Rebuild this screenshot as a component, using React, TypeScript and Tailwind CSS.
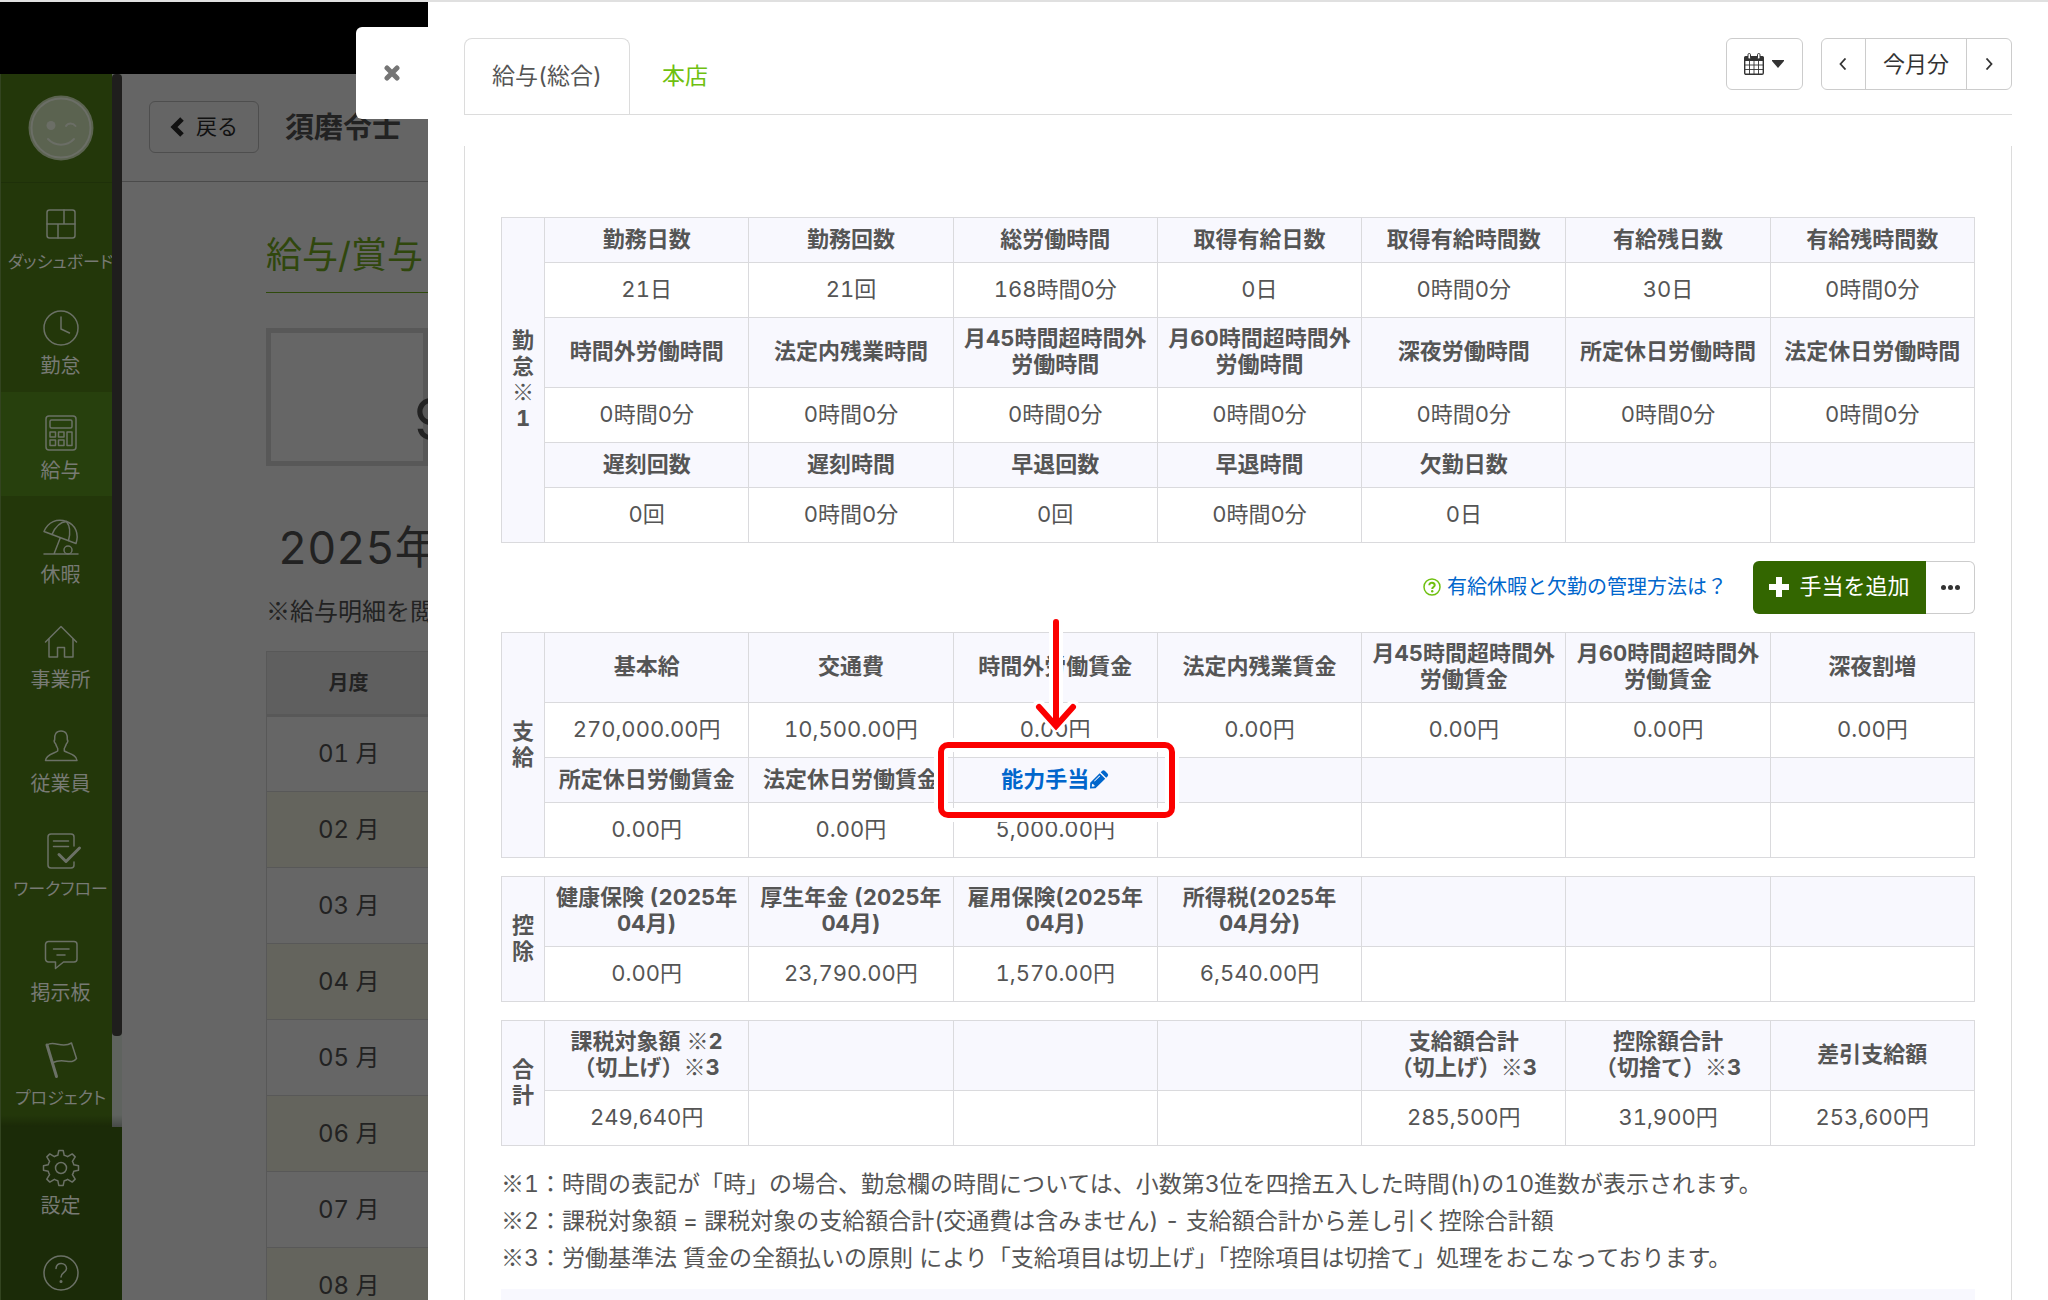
import type { ReactNode } from "react";

type Cell = { label: string; value: string; editable?: boolean };

const c = (label = "", value = "", editable = false): Cell => ({ label, value, editable });

const attendance: Cell[][] = [
  [
    c("勤務日数", "21日"),
    c("勤務回数", "21回"),
    c("総労働時間", "168時間0分"),
    c("取得有給日数", "0日"),
    c("取得有給時間数", "0時間0分"),
    c("有給残日数", "30日"),
    c("有給残時間数", "0時間0分"),
  ],
  [
    c("時間外労働時間", "0時間0分"),
    c("法定内残業時間", "0時間0分"),
    c("月45時間超時間外\n労働時間", "0時間0分"),
    c("月60時間超時間外\n労働時間", "0時間0分"),
    c("深夜労働時間", "0時間0分"),
    c("所定休日労働時間", "0時間0分"),
    c("法定休日労働時間", "0時間0分"),
  ],
  [
    c("遅刻回数", "0回"),
    c("遅刻時間", "0時間0分"),
    c("早退回数", "0回"),
    c("早退時間", "0時間0分"),
    c("欠勤日数", "0日"),
    c(),
    c(),
  ],
];

const payments: Cell[][] = [
  [
    c("基本給", "270,000.00円"),
    c("交通費", "10,500.00円"),
    c("時間外労働賃金", "0.00円"),
    c("法定内残業賃金", "0.00円"),
    c("月45時間超時間外\n労働賃金", "0.00円"),
    c("月60時間超時間外\n労働賃金", "0.00円"),
    c("深夜割増", "0.00円"),
  ],
  [
    c("所定休日労働賃金", "0.00円"),
    c("法定休日労働賃金", "0.00円"),
    c("能力手当", "5,000.00円", true),
    c(),
    c(),
    c(),
    c(),
  ],
];

const deductions: Cell[][] = [
  [
    c("健康保険 (2025年\n04月)", "0.00円"),
    c("厚生年金 (2025年\n04月)", "23,790.00円"),
    c("雇用保険(2025年\n04月)", "1,570.00円"),
    c("所得税(2025年\n04月分)", "6,540.00円"),
    c(),
    c(),
    c(),
  ],
];

const totals: Cell[][] = [
  [
    c("課税対象額 ※2\n（切上げ）※3", "249,640円"),
    c(),
    c(),
    c(),
    c("支給額合計\n（切上げ）※3", "285,500円"),
    c("控除額合計\n（切捨て）※3", "31,900円"),
    c("差引支給額", "253,600円"),
  ],
];

const months = ["01 月", "02 月", "03 月", "04 月", "05 月", "06 月", "07 月", "08 月"];

/* Sets the reference mark in the Japanese face, at full width and regular weight. */
function Marked({ text }: { text: string }) {
  return (
    <>
      {text.split("※").map((part, i) => (
        <span key={i}>
          {i > 0 && <span className="font-['Noto_Sans_CJK_JP',sans-serif] leading-none font-normal">※</span>}
          {part}
        </span>
      ))}
    </>
  );
}

function Icon({ children }: { children: ReactNode }) {
  return (
    <svg
      viewBox="0 0 36 36"
      className="size-9 shrink-0 overflow-visible"
      fill="none"
      stroke="currentColor"
      strokeWidth="1.5"
      strokeLinecap="round"
      strokeLinejoin="round"
      aria-hidden="true"
    >
      {children}
    </svg>
  );
}

const icons = {
  dashboard: (
    <Icon>
      <rect x="4" y="4" width="28" height="28" rx="2.5" />
      <path d="M4 18h28M21 4v14M15 18v14" />
    </Icon>
  ),
  clock: (
    <Icon>
      <circle cx="18" cy="18" r="17" />
      <path d="M18 7v12l8.500 4" />
    </Icon>
  ),
  calculator: (
    <Icon>
      <rect x="3" y="1" width="30" height="34" rx="3" />
      <rect x="7" y="5" width="22" height="8" rx="1.500" />
      <rect x="7" y="17" width="5.500" height="5" />
      <rect x="15.500" y="17" width="5.500" height="5" />
      <rect x="24" y="17" width="5" height="13.500" />
      <rect x="7" y="25" width="5.500" height="5.500" />
      <rect x="15.500" y="25" width="5.500" height="5.500" />
    </Icon>
  ),
  umbrella: (
    <Icon>
      <path d="M1 12.500C5 3 14 -1 23.500 2.500S36 15 33 24.500Z" />
      <path d="M9 15.500C12 8.500 17 3 23.500 2.500C27 7 27.500 14 25.500 21.500" />
      <path d="M17.300 18.800L11 35M1 35h34" />
      <circle cx="25" cy="31" r="4" />
    </Icon>
  ),
  home: (
    <Icon>
      <path d="M2.500 18L18 2.500L33.500 18" />
      <path d="M6 15v18h8.500V23.500h7V33H30V15" />
    </Icon>
  ),
  person: (
    <Icon>
      <path d="M18 3c5 0 6.700 3.500 6.300 8.500c1 1.500 0 3.500-1 4.500c-.5 2-1.500 3.500-2 4.500v2.500c4 2.500 12.200 3.500 12.700 9.500H2.500c.5-6 8.500-7 12.200-9.500v-2.500c-.5-1-1.500-2.500-2-4.500c-1-1-2-3-1-4.500C11.300 6.500 13 3 18 3Z" />
    </Icon>
  ),
  workflow: (
    <Icon>
      <path d="M31 13V4a3 3 0 0 0-3-3H8a3 3 0 0 0-3 3v28a3 3 0 0 0 3 3h20a3 3 0 0 0 3-3v-3M10.500 8h15M10.500 13.500h15" />
      <path d="M16 21.500l7 7L36.500 15" strokeWidth="3" />
    </Icon>
  ),
  board: (
    <Icon>
      <path d="M5.500 4.500h25.500a3 3 0 0 1 3 3v14.500a3 3 0 0 1-3 3H20.500l-8 6.500V25h-7a3 3 0 0 1-3-3V7.500a3 3 0 0 1 3-3ZM10.500 12h15.500M14 18h8" />
    </Icon>
  ),
  flag: (
    <Icon>
      <path d="M4 3l9.500 31.500" strokeWidth="3" />
      <path d="M4 3c7-5 15 4 24.500-2l5 15.500c-5 7-13-1-23.500 4" />
    </Icon>
  ),
  gear: (
    <Icon>
      <circle cx="18" cy="18" r="5.500" />
      <path d="M15.800 0.500h4.400l1 4.800q2 .5 3.400 1.400l4.600-2.800l3 3l-2.800 4.500q1 1.500 1.400 3.400l4.700 1v4.400l-4.700 1q-.5 2-1.400 3.400l2.800 4.500l-3 3l-4.600-2.800q-1.500 1-3.400 1.400l-1 4.700h-4.400l-1-4.700q-2-.5-3.400-1.400l-4.600 2.800l-3-3l2.800-4.500q-1-1.500-1.400-3.400l-4.700-1v-4.400l4.700-1q.5-2 1.400-3.400l-2.800-4.500l3-3l4.600 2.800q1.500-1 3.400-1.400Z" />
    </Icon>
  ),
  help: (
    <Icon>
      <circle cx="18" cy="18" r="17" />
      <path d="M13 13.500c0-7 10.500-6.500 10.500 0c0 4-5.500 4-5.500 8.500" />
      <circle cx="18" cy="26.500" r=".8" fill="currentColor" />
    </Icon>
  ),
};

type NavEntry = { label: string; icon: ReactNode; active?: boolean; long?: boolean };

const nav: NavEntry[] = [
  { label: "ダッシュボード", icon: icons.dashboard, long: true },
  { label: "勤怠", icon: icons.clock },
  { label: "給与", icon: icons.calculator, active: true },
  { label: "休暇", icon: icons.umbrella },
  { label: "事業所", icon: icons.home },
  { label: "従業員", icon: icons.person },
  { label: "ワークフロー", icon: icons.workflow, long: true },
  { label: "掲示板", icon: icons.board },
  { label: "プロジェクト", icon: icons.flag, long: true },
];

function NavItem({ label, icon, active, long }: NavEntry) {
  return (
    <a
      href="#"
      aria-label={label || "ヘルプ"}
      className={
        "flex min-h-0 flex-1 flex-col items-center gap-2 pt-[23px] pl-2 text-[#6b7166] " +
        (active ? "bg-[#27400d]" : "")
      }
    >
      {icon}
      <span
        className={
          "leading-6 whitespace-nowrap text-[#777a74] [font-feature-settings:'palt'] " +
          (long ? "text-[17px]" : "text-[20px]")
        }
      >
        {label}
      </span>
    </a>
  );
}

function Sidebar() {
  return (
    <nav className="flex w-[122px] shrink-0 flex-col border-l border-[#334420] bg-[#1b2b08]">
      <div className="relative flex h-[1053px] shrink-0">
        <div className="flex min-w-0 flex-1 flex-col overflow-hidden bg-[#23370a] pb-1">
          <div className="flex h-[109px] shrink-0 items-center justify-center border-b border-[#1e3009] pl-2">
            <svg viewBox="0 0 66 66" className="size-[66px]" fill="none" stroke="#6b6e66" strokeLinecap="round" aria-hidden="true">
              <circle cx="33" cy="33" r="32.500" fill="#5b6350" stroke="none" />
              <circle cx="33" cy="33" r="29.500" strokeWidth="2" />
              <circle cx="23" cy="30.500" r="4.500" fill="#6b6e66" stroke="none" />
              <path d="M38 31c2-3.500 7-3.500 9.500 0M20 44c7 7.500 19 7.500 26 0" strokeWidth="2" />
            </svg>
          </div>
          {nav.map((item) => (
            <NavItem key={item.label} {...item} />
          ))}
        </div>
        <div className="w-2.5 bg-[#5f635f]">
          <div className="h-[962px] rounded-[4px] bg-[#1f1e1d]" />
        </div>
        <div className="absolute inset-x-0 bottom-0 h-3 bg-linear-to-b from-transparent to-black/25" />
      </div>
      <div className="flex h-[210px] shrink-0 flex-col pr-2.5">
        <NavItem label="設定" icon={icons.gear} />
        <NavItem label="" icon={icons.help} />
      </div>
    </nav>
  );
}

function BackgroundPage() {
  return (
    <div className="relative flex w-[428px] shrink-0 flex-col overflow-hidden bg-[#666]">
      <div className="h-[72px] shrink-0 bg-black" />
      <div className="flex min-h-0 flex-1">
        <Sidebar />
        <main className="min-w-0 flex-1 overflow-hidden whitespace-nowrap text-[#222]">
          <header className="flex h-[108px] items-center gap-[26px] border-b border-[#4b4b4b] bg-[#656565] pr-2 pb-0.5 pl-[27px]">
            <button
              type="button"
              className="flex h-[52px] w-[110px] shrink-0 items-center justify-center gap-3 rounded-md border border-[#4e4e4e] text-[21px] text-[#111]"
            >
              <svg viewBox="0 0 14 20" className="h-5 w-3.5" fill="none" stroke="#111" strokeWidth="5" aria-hidden="true">
                <path d="M12 2L4 10L12 18" />
              </svg>
              戻る
            </button>
            <h1 className="pt-0.5 text-[29px] font-bold">須磨令士</h1>
          </header>
          <div className="pl-36">
            <h2 className="mt-12 border-b border-[#2f4a0c] pb-3 text-[36px] leading-[50px] text-[#30470d]">給与/賞与</h2>
            <div className="mt-[35px] flex h-[138px] items-center border-5 border-[#585858] pt-11 pl-[142px] text-[58px]">
              9
            </div>
            <p className="mt-[54px] pl-3 text-[45px] leading-[56px]">2025年</p>
            <p className="mt-[18px] text-[24px] leading-9">
              <Marked text="※給与明細を閲覧" />
            </p>
            <table className="mt-[21px] w-[500px] table-fixed border-collapse text-center">
              <thead>
                <tr className="h-[64px]">
                  <th className="w-[164px] border border-b-3 border-[#585858] bg-[#5f5f5f] text-[20px]">月度</th>
                  <th className="border border-b-3 border-[#585858] bg-[#5f5f5f]" aria-label="支給額" />
                </tr>
              </thead>
              <tbody>
                {months.map((m) => (
                  <tr key={m} className="h-[76px] even:bg-[#64645d]">
                    <td className="border-y border-l border-[#585858] text-[24px]">{m}</td>
                    <td className="border-y border-[#585858]" />
                  </tr>
                ))}
              </tbody>
            </table>
          </div>
        </main>
      </div>
      <button
        type="button"
        aria-label="閉じる"
        className="absolute top-[25px] right-0 flex h-[92px] w-[72px] items-center justify-center rounded-l-md bg-white"
      >
        <svg viewBox="0 0 16 16" className="size-4" fill="none" stroke="#757575" strokeWidth="5" strokeLinecap="round" aria-hidden="true">
          <path d="M3 3L13 13M13 3L3 13" />
        </svg>
      </button>
    </div>
  );
}

function Callout() {
  return (
    <div className="pointer-events-none absolute -top-4 -right-[18px] -bottom-4 -left-4" aria-hidden="true">
      <div className="absolute inset-0 rounded-[10px] border-6 border-[#fb0000] shadow-[0_0_0_4px_#fff,inset_0_0_0_4px_#fff]" />
      <svg viewBox="0 0 50 116" className="absolute bottom-full left-1/2 mb-2.5 h-[116px] w-[50px] -translate-x-1/2" fill="none" strokeLinecap="round">
        <path d="M25 7v98M8 91l17 17l17-17" stroke="#fff" strokeWidth="14" />
        <path d="M25 6v100" stroke="#fb0000" strokeWidth="6" />
        <path d="M8 91l17 19l17-19" stroke="#fb0000" strokeWidth="6" />
      </svg>
    </div>
  );
}

function PencilIcon() {
  return (
    <svg viewBox="0 0 20 20" className="size-5" fill="#0066cc" aria-hidden="true">
      <path d="M13 2q1.500-1.500 3 0l2.500 2.500q1.500 1.500 0 3l-1.300 1.300l-5.500-5.500Z" />
      <path fillRule="evenodd" d="M10.700 4.300l5.500 5.500L6.500 19.300L1 19.500L1.200 13.800ZM3 15.300l-.2 2.400l2.400-.2l.6-.8L3.800 14.700ZM10.500 6.600L5 12l.6.600L11.100 7.200Z" />
    </svg>
  );
}

function SlipTable({ title, rows }: { title: string[]; rows: Cell[][] }) {
  return (
    <table className="w-full table-fixed border-collapse text-center text-[22px] leading-[26px]">
      <colgroup>
        <col className="w-[43px]" />
        <col span={7} />
      </colgroup>
      <tbody>
        {rows.flatMap((row, i) => [
          <tr key={`h${i}`} className="h-[45px] bg-[#f8f8fe]">
            {i === 0 && (
              <th scope="rowgroup" rowSpan={rows.length * 2} className="border border-[#dadadd] bg-[#f8f8fe] pb-0.5">
                {title.map((ch) => (
                  <span key={ch} className="block">
                    <Marked text={ch} />
                  </span>
                ))}
              </th>
            )}
            {row.map((cell, j) => (
              <th key={j} className="relative border border-[#dadadd] pt-[7px] pb-2.5 whitespace-pre">
                {cell.editable ? (
                  <>
                    <a href="#" className="inline-flex items-center text-[#0066cc]">
                      {cell.label}
                      <PencilIcon />
                    </a>
                    <Callout />
                  </>
                ) : (
                  <Marked text={cell.label} />
                )}
              </th>
            ))}
          </tr>,
          <tr key={`v${i}`} className="h-[55px]">
            {row.map((cell, j) => (
              <td key={j} className="border border-[#dadadd] pb-0.5">
                {cell.value}
              </td>
            ))}
          </tr>,
        ])}
      </tbody>
    </table>
  );
}

function Drawer() {
  return (
    <section className="flex min-w-0 flex-1 flex-col bg-white px-9 text-[#555]">
      <div className="mt-9 flex h-[77px] shrink-0 items-start justify-between border-b border-[#dcdcdc]">
        <div role="tablist" className="flex text-[23px]">
          <button
            type="button"
            role="tab"
            aria-selected="true"
            className="h-[76px] rounded-t-lg border border-b-0 border-[#dcdcdc] bg-white px-[27px]"
          >
            給与(総合)
          </button>
          <button type="button" role="tab" aria-selected="false" className="h-[76px] px-8 text-[#6fc010]">
            本店
          </button>
        </div>
        <div className="flex gap-[18px] text-[22px] text-[#333]">
          <button
            type="button"
            aria-label="カレンダー"
            className="flex h-[52px] w-[77px] items-center justify-center gap-2 rounded-md border border-[#ccc]"
          >
            <svg viewBox="0 0 20 22" className="h-[22px] w-5" fill="none" stroke="#333" aria-hidden="true">
              <path d="M.7 7h18.600v13a1.300 1.300 0 0 1-1.300 1.300H2A1.300 1.300 0 0 1 .7 20Z" strokeWidth="1.400" />
              <path d="M0 4.500A1.500 1.500 0 0 1 1.500 3h17A1.500 1.500 0 0 1 20 4.500V8H0Z" fill="#333" stroke="none" />
              <path d="M.5 12h19M.5 16.500h19M5.500 8v13.500M10 8v13.500M14.500 8v13.500" strokeWidth=".9" />
              <rect x="4" y=".5" width="2.500" height="5.500" rx="1.200" fill="#fff" />
              <rect x="13.500" y=".5" width="2.500" height="5.500" rx="1.200" fill="#fff" />
            </svg>
            <svg viewBox="0 0 12 8" className="h-2 w-3" fill="#333" aria-hidden="true">
              <path d="M0 0h12v1L6 8L0 1Z" />
            </svg>
          </button>
          <div className="flex h-[52px] divide-x divide-[#ccc] rounded-md border border-[#ccc]">
            <button type="button" aria-label="前の月" className="flex w-11 items-center justify-center">
              <svg viewBox="0 0 8 12" className="h-3 w-2" fill="none" stroke="#333" strokeWidth="1.800" aria-hidden="true">
                <path d="M6.500 .5L1.500 6L6.500 11.500" />
              </svg>
            </button>
            <button type="button" className="px-[17px]">
              今月分
            </button>
            <button type="button" aria-label="次の月" className="flex w-11 items-center justify-center">
              <svg viewBox="0 0 8 12" className="h-3 w-2" fill="none" stroke="#333" strokeWidth="1.800" aria-hidden="true">
                <path d="M1.500 .5L6.500 6L1.500 11.500" />
              </svg>
            </button>
          </div>
        </div>
      </div>

      <div className="mt-[31px] min-h-0 flex-1 overflow-hidden border-x border-[#dcdcdc] px-9 pt-[71px]">
        <SlipTable title={["勤", "怠", "※", "1"]} rows={attendance} />

        <div className="flex items-center justify-end gap-[26px] pt-[18px] pb-[18px]">
          <a href="#" className="flex items-center gap-1.5 pb-0.5 text-[20px] text-[#0066cc]">
            <svg viewBox="0 0 18 18" className="size-[18px]" fill="none" stroke="#6fc010" aria-hidden="true">
              <circle cx="9" cy="9" r="8" strokeWidth="1.500" />
              <path d="M6.300 7.300c0-3.600 5.400-3.400 5.400 0c0 1.700-2.500 1.700-2.500 3.700" strokeWidth="2" />
              <circle cx="9.200" cy="13.200" r="1.200" fill="#6fc010" stroke="none" />
            </svg>
            有給休暇と欠勤の管理方法は？
          </a>
          <div className="flex h-[53px] text-[22px]">
            <button type="button" className="flex w-[173px] items-center justify-center gap-2.5 rounded-l-md bg-[#336600] pb-0.5 text-white">
              <svg viewBox="0 0 20 20" className="size-5" fill="none" stroke="#fff" strokeWidth="6" aria-hidden="true">
                <path d="M10 0v20M0 10h20" />
              </svg>
              手当を追加
            </button>
            <button
              type="button"
              aria-label="その他"
              className="flex w-[49px] items-center justify-center gap-0.5 rounded-r-md border border-l-0 border-[#ccc]"
            >
              <span className="size-[5px] rounded-full bg-[#333]" />
              <span className="size-[5px] rounded-full bg-[#333]" />
              <span className="size-[5px] rounded-full bg-[#333]" />
            </button>
          </div>
        </div>

        <div className="flex flex-col gap-[18px]">
          <SlipTable title={["支", "給"]} rows={payments} />
          <SlipTable title={["控", "除"]} rows={deductions} />
          <SlipTable title={["合", "計"]} rows={totals} />
        </div>

        <div className="mt-5 text-[23px] leading-[37px]">
          <p>
            <Marked text="※1：時間の表記が「時」の場合、勤怠欄の時間については、小数第3位を四捨五入した時間(h)の10進数が表示されます。" />
          </p>
          <p>
            <Marked text="※2：課税対象額 = 課税対象の支給額合計(交通費は含みません) - 支給額合計から差し引く控除合計額" />
          </p>
          <p>
            <Marked text="※3：労働基準法 賃金の全額払いの原則 により「支給項目は切上げ」「控除項目は切捨て」処理をおこなっております。" />
          </p>
        </div>
        <div className="mt-3 h-20 bg-[#f8f8fe]" />
      </div>
    </section>
  );
}

export default function App() {
  return (
    <div
      lang="ja"
      className="flex h-screen overflow-hidden border-t-2 border-[#e0e0e0] bg-white font-['Inter','Noto_Sans_CJK_JP',sans-serif] tabular-nums"
    >
      <BackgroundPage />
      <Drawer />
    </div>
  );
}
